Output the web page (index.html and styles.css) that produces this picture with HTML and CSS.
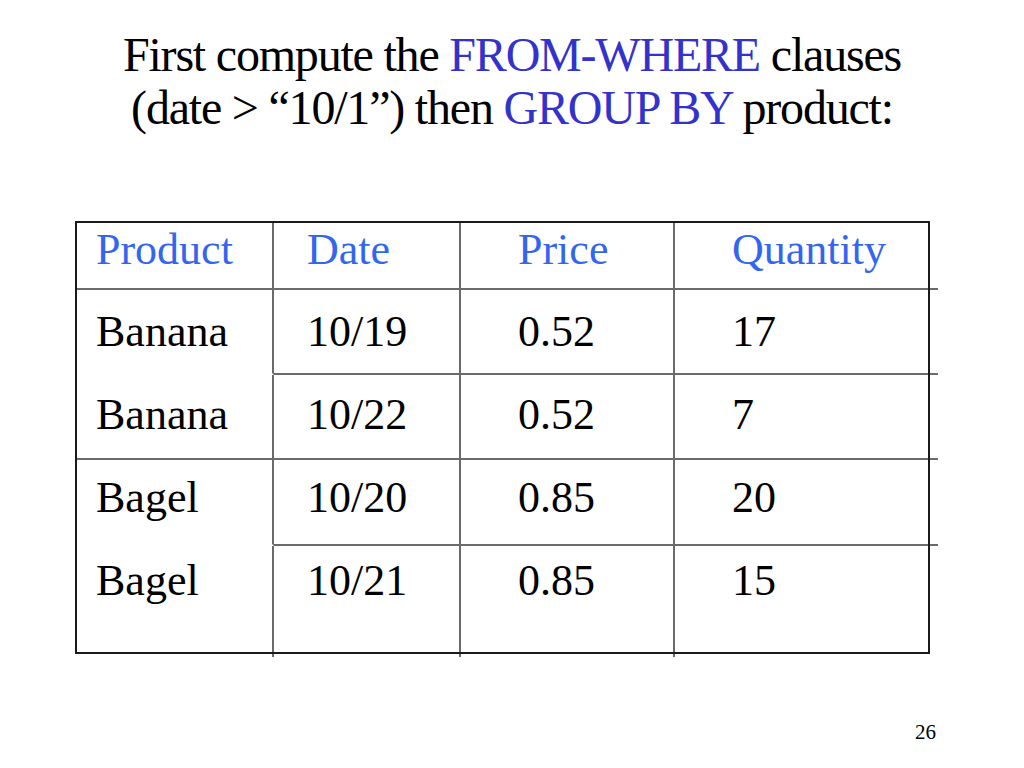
FILE: index.html
```html
<!DOCTYPE html>
<html>
<head>
<meta charset="utf-8">
<link rel="stylesheet" href="styles.css">
</head>
<body>
<div class="slide">
  <h1 class="title">First compute the <span class="kw">FROM-WHERE</span> clauses<br>(date &gt; “10/1”) then <span class="kw">GROUP BY</span> product:</h1>
  <table class="grid">
    <colgroup><col class="c1"><col class="c2"><col class="c3"><col class="c4"></colgroup>
    <tr class="r0 head"><td>Product</td><td>Date</td><td>Price</td><td>Quantity</td></tr>
    <tr class="r1"><td class="nob">Banana</td><td>10/19</td><td>0.52</td><td>17</td></tr>
    <tr class="r2"><td>Banana</td><td>10/22</td><td>0.52</td><td>7</td></tr>
    <tr class="r3"><td class="nob">Bagel</td><td>10/20</td><td>0.85</td><td>20</td></tr>
    <tr class="r4 last"><td>Bagel</td><td>10/21</td><td>0.85</td><td>15</td></tr>
  </table>
  <div class="footer"><span class="pagenum">26</span></div>
</div>
</body>
</html>
```

FILE: styles.css
```css
html, body {
  margin: 0;
  padding: 0;
  background: #ffffff;
}
.slide {
  width: 1024px;
  height: 768px;
  display: flex;
  flex-direction: column;
  font-family: "Liberation Serif", "Times New Roman", serif;
  color: #000;
}
.title {
  margin: 28px 0 0 0;
  font-size: 48px;
  letter-spacing: -1.2px;
  font-weight: normal;
  line-height: 53px;
  text-align: center;
}
.kw { color: #3333cc; }

.grid {
  margin: 87px 0 0 75px;
  width: 855px;
  table-layout: fixed;
  border-collapse: separate;
  border-spacing: 0;
  border: 2px solid #1a1a1a;
  font-size: 44px;
  line-height: 44px;
}
.c1 { width: 197px; }
.c2 { width: 187px; }
.c3 { width: 214px; }
.grid td {
  position: relative;
  vertical-align: top;
  padding: 0;
  border-right: 2px solid #6a6a6a;
  border-bottom: 2px solid #6a6a6a;
  white-space: nowrap;
}
.grid td:nth-child(1) { padding-left: 19px; }
.grid td:nth-child(2) { padding-left: 33px; }
.grid td:nth-child(3) { padding-left: 57px; }
.grid td:nth-child(4) { padding-left: 57px; border-right: none; }
.grid td.nob { border-bottom-color: transparent; }
.grid tr.last td { border-bottom: none; }

.grid td:nth-child(4)::after {
  content: "";
  position: absolute;
  right: -10px;
  bottom: -2px;
  width: 8px;
  height: 2px;
  background: #6a6a6a;
}
.grid tr.last td:nth-child(4)::after { display: none; }
.grid tr.last td:not(:nth-child(4))::after {
  content: "";
  position: absolute;
  right: -2px;
  bottom: -5px;
  width: 2px;
  height: 3px;
  background: #6a6a6a;
}

.head td { color: #3366ee; }
.r0 { height: 67px; }
.r1 { height: 85px; }
.r2 { height: 85px; }
.r3 { height: 86px; }
.r4 { height: 106px; }
.r0 td { padding-top: 5px; }
.r1 td { padding-top: 20px; }
.r2 td { padding-top: 18px; }
.r3 td { padding-top: 16px; }
.r4 td { padding-top: 13px; }

.footer {
  margin-top: auto;
  padding: 0 88px 24px 0;
  text-align: right;
  font-size: 21px;
  line-height: 24px;
}
```
